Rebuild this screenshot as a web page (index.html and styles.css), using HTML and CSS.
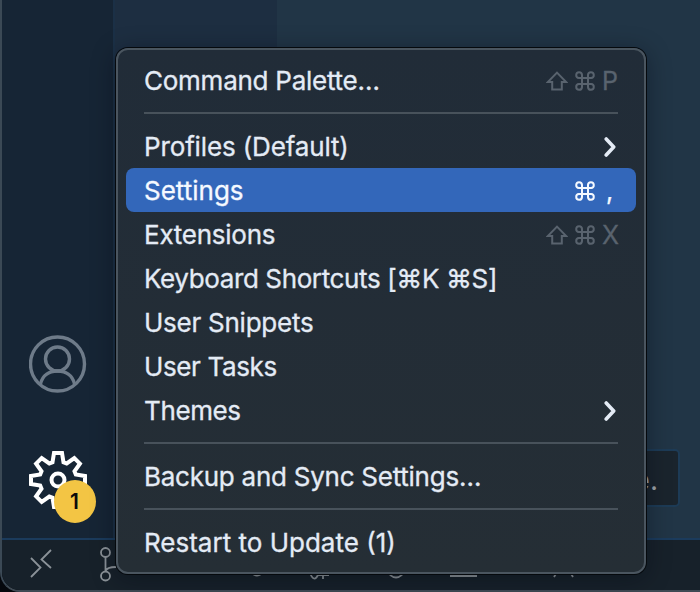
FILE: index.html
```
<!DOCTYPE html>
<html lang="en">
<head>
<meta charset="utf-8">
<title>Settings menu</title>
<link rel="stylesheet" href="styles.css">
</head>
<body>
<svg class="defs" aria-hidden="true">
  <symbol id="cmd" viewBox="0 0 20 20"><path d="M7 7H3.9A2.9 2.9 0 1 1 7 3.9V16.1A2.9 2.9 0 1 1 3.9 13H16.1A2.9 2.9 0 1 1 13 16.1V3.9A2.9 2.9 0 1 1 16.1 7H7"/></symbol>
  <symbol id="shift" viewBox="0 0 22 20"><path d="M11 1.600L20.200 11H15.800V18.500H6.200V11H1.800Z"/></symbol>
  <symbol id="chevron" viewBox="0 0 12 20"><path d="M2.200 2L9.700 10L2.200 18"/></symbol>
</svg>
<div class="window">
  <div class="main">
    <nav class="activity">
      <svg class="account" viewBox="0 0 58 58"><circle cx="28.500" cy="29" r="27"/><circle cx="28.500" cy="24" r="12"/><path d="M11.500 49C13.500 40 20.500 36 28.500 36S43.500 40 45.500 49"/></svg>
      <div class="manage">
        <svg class="gear" viewBox="0 0 60 60"><path d="M24.5 12.2L26 3H34L35.500 12.200L38.700 13.500L46.300 8.100L51.900 13.700L46.500 21.300L47.800 24.500L57 26V34L47.800 35.500L46.500 38.700L51.900 46.300L46.300 51.900L38.700 46.500L35.500 47.800L34 57H26L24.500 47.800L21.300 46.500L13.700 51.900L8.100 46.300L13.500 38.700L12.200 35.500L3 34V26L12.200 24.500L13.500 21.300L8.100 13.700L13.700 8.100L21.300 13.500Z"/><circle cx="30" cy="30" r="6.500"/></svg>
        <span class="badge">1</span>
      </div>
    </nav>
    <div class="sidebar"></div>
    <div class="editor"><div class="toast">e.</div></div>
  </div>
  <footer class="status">
    <svg viewBox="0 0 700 50">
      <path d="M31 18L40.500 27.500L31 37M51 10L41.500 19.500L51 28"/>
      <circle cx="105.500" cy="12.500" r="4.500"/><circle cx="105.500" cy="36" r="4.500"/><path d="M105.500 17V31.500M105.500 31Q107 27 116 27"/>
      <path d="M249 30Q257 41 265 30M310 33Q314 43 318 35M323 33V39M318 35H329M386 30Q396 45 406 30M450 36H477M557 32L554 37M570 32L573 37"/>
      <path class="faint" d="M145 34H148M174 34H178M427 34H432M495 34H499M594 34H599"/>
    </svg>
  </footer>
</div>
<div class="menu" role="menu">
  <div class="item tight"><span>Command Palette…</span><span class="keys"><svg class="shift"><use href="#shift"/></svg><svg class="cmd"><use href="#cmd"/></svg><kbd>P</kbd></span></div>
  <hr>
  <div class="item snug"><span>Profiles (Default)</span><svg class="chevron"><use href="#chevron"/></svg></div>
  <div class="item selected"><span>Settings</span><span class="keys"><svg class="cmd"><use href="#cmd"/></svg><kbd>,</kbd></span></div>
  <div class="item tight"><span>Extensions</span><span class="keys"><svg class="shift"><use href="#shift"/></svg><svg class="cmd"><use href="#cmd"/></svg><kbd>X</kbd></span></div>
  <div class="item tighter"><span>Keyboard Shortcuts [⌘K ⌘S]</span></div>
  <div class="item tight"><span>User Snippets</span></div>
  <div class="item tighter"><span>User Tasks</span></div>
  <div class="item tighter"><span>Themes</span><svg class="chevron"><use href="#chevron"/></svg></div>
  <hr>
  <div class="item tight"><span>Backup and Sync Settings…</span></div>
  <hr>
  <div class="item"><span>Restart to Update (1)</span></div>
</div>
</body>
</html>
```
FILE: styles.css
```
* { box-sizing: border-box; }
body {
  margin: 0;
  width: 700px;
  height: 592px;
  overflow: hidden;
  position: relative;
  background: #05080d;
  font-family: Inter, "Liberation Sans", sans-serif;
}
svg { fill: none; stroke: currentColor; display: block; }
.defs { position: absolute; width: 0; height: 0; }
.window {
  height: 592px;
  display: flex;
  flex-direction: column;
  border-left: 2px solid #3b4955;
  border-bottom: 2px solid #3f4a54;
  border-bottom-left-radius: 20px;
  overflow: hidden;
}
.main { height: 540px; display: flex; border-bottom: 2px solid #1b3b5c; }
.activity {
  width: 113px;
  background: #162535;
  border-right: 2px solid #1b3046;
  display: flex;
  flex-direction: column;
  align-items: center;
  justify-content: flex-end;
  gap: 57px;
  padding-bottom: 28px;
}
.account { width: 58px; height: 58px; color: #6e7b89; stroke-width: 3.4; }
.manage { position: relative; width: 60px; height: 60px; }
.gear { width: 60px; height: 60px; color: #fff; stroke-width: 4; }
.badge {
  position: absolute;
  left: 26px;
  top: 30px;
  width: 42px;
  height: 43px;
  border-radius: 50%;
  background: #f3c544;
  color: #0b0b0b;
  font: 600 21px/43px Inter, sans-serif;
  text-align: center;
}
.sidebar { width: 162px; background: #1d2e41; }
.editor {
  flex: 1;
  background: #213546;
  display: flex;
  justify-content: flex-end;
  align-items: flex-end;
  padding: 0 20px 31px 0;
}
.toast {
  width: 100px;
  height: 58px;
  border: 2px solid #1d3b56;
  border-radius: 5px;
  background: #1a242d;
  color: #9da3a8;
  font: 28px/58px Inter, sans-serif;
  text-align: right;
  padding-right: 20px;
}
.status { flex: 1; background: #17212a; color: #8b9298; }
.status svg { width: 700px; height: 50px; margin-left: -2px; stroke-width: 1.8; }
.status .faint { opacity: .4; }
.menu {
  position: absolute;
  left: 116px;
  top: 48px;
  width: 530px;
  height: 526px;
  padding: 8px;
  border: 2px solid #4a555f;
  border-radius: 12px;
  background: linear-gradient(#212c38, #252e35);
  box-shadow: 0 0 0 1px #05090d, 0 4px 24px rgba(0, 8, 18, .4);
  color: #e4ebf5;
}
.item {
  height: 44px;
  padding: 2px 18px 0;
  display: flex;
  align-items: center;
  justify-content: space-between;
  border-radius: 8px;
  font-size: 26px;
  line-height: 42px;
  white-space: nowrap;
  -webkit-text-stroke: .3px currentColor;
}
.snug { letter-spacing: -.14px; }
.tight { letter-spacing: -.25px; }
.tighter { letter-spacing: -.38px; }
.selected { background: #3367ba; color: #f5f9ff; }
hr { height: 2px; margin: 10px 18px; border: 0; background: #48525b; }
.keys { display: flex; align-items: center; color: #59636e; }
.selected .keys { color: #f5f9ff; }
.shift { width: 22px; height: 20px; margin-right: 7px; stroke-width: 2; }
.cmd { width: 20px; height: 20px; margin-right: 7px; stroke-width: 2; }
kbd { font: inherit; font-size: 25px; width: 15px; margin-right: 1px; text-align: center; }
.chevron { width: 12px; height: 20px; margin-right: 2px; stroke-width: 3.6; stroke-linecap: round; stroke-linejoin: round; }
```
